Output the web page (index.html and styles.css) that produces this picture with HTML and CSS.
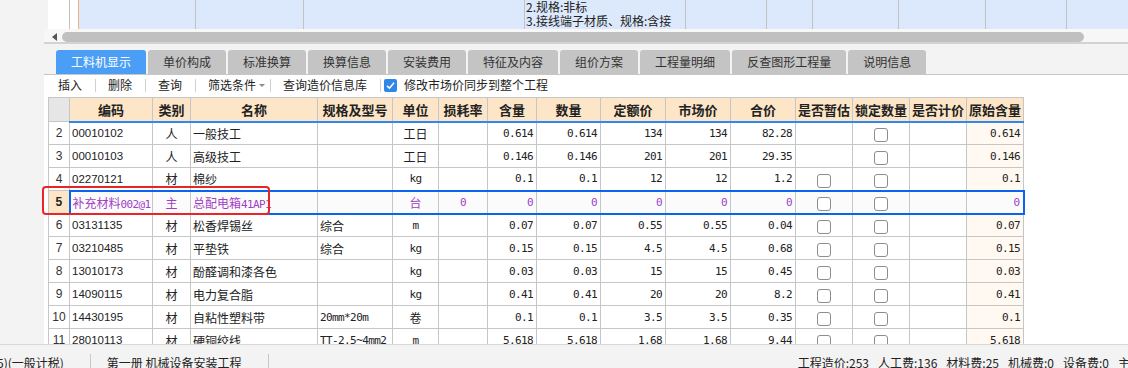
FILE: index.html
```html
<!DOCTYPE html>
<html lang="zh-CN">
<head>
    <meta charset="UTF-8">
    <title>工料机显示</title>
    <link rel="stylesheet" href="styles.css">
</head>
<body>
    <div class="main">
        <div class="gutter"></div>
        <div class="panel">
            <!-- upper list (scrolled) -->
            <div class="top-grid">
                <div class="tg w22"></div>
                <div class="tg w9 orange"></div>
                <div class="tg blue w117"></div>
                <div class="tg blue w108"></div>
                <div class="tg blue w221"></div>
                <div class="tg blue w161 desc">
                    <div>2.规格:非标</div>
                    <div>3.接线端子材质、规格:含接</div>
                </div>
                <div class="tg blue w81"></div>
                <div class="tg blue w46"></div>
                <div class="tg blue w86"></div>
                <div class="tg blue w87"></div>
                <div class="tg blue w81"></div>
                <div class="tg blue rest"></div>
            </div>
            <div class="hscroll">
                <span class="arrow"></span>
                <span class="thumb"></span>
            </div>

            <div class="tabbar">
                <div class="tab active">工料机显示</div>
                <div class="tab">单价构成</div>
                <div class="tab">标准换算</div>
                <div class="tab">换算信息</div>
                <div class="tab">安装费用</div>
                <div class="tab">特征及内容</div>
                <div class="tab">组价方案</div>
                <div class="tab">工程量明细</div>
                <div class="tab">反查图形工程量</div>
                <div class="tab">说明信息</div>
            </div>

            <div class="toolbar">
                <span class="tool">插入</span>
                <span class="sep"></span>
                <span class="tool">删除</span>
                <span class="sep"></span>
                <span class="tool">查询</span>
                <span class="sep"></span>
                <span class="tool drop">筛选条件<span class="caret"></span></span>
                <span class="sep"></span>
                <span class="tool">查询造价信息库</span>
                <span class="sep"></span>
                <label class="tool check">
                    <span class="checked">
                        <svg width="13" height="13" viewBox="0 0 13 13"><polyline points="3,6.8 5.5,9.2 10,3.8" fill="none" stroke="#fff" stroke-width="1.6"/></svg>
                    </span>
                    修改市场价同步到整个工程
                </label>
            </div>

            <div class="grid-wrap">
                <table class="grid">
                    <colgroup>
                        <col style="width:21px"><col style="width:83px"><col style="width:38px"><col style="width:127px">
                        <col style="width:75px"><col style="width:46px"><col style="width:49px"><col style="width:49px">
                        <col style="width:64px"><col style="width:65px"><col style="width:65px"><col style="width:65px">
                        <col style="width:57px"><col style="width:57px"><col style="width:57px"><col style="width:57px">
                    </colgroup>
                    <thead>
                        <tr>
                            <th class="corner"></th>
                            <th>编码</th><th>类别</th><th>名称</th><th>规格及型号</th><th>单位</th><th>损耗率</th><th>含量</th>
                            <th>数量</th><th>定额价</th><th>市场价</th><th>合价</th><th>是否暂估</th><th>锁定数量</th><th>是否计价</th><th>原始含量</th>
                        </tr>
                    </thead>
                    <tbody>
                        <tr>
                            <td class="rn">2</td><td class="code">00010102</td><td class="ctr">人</td><td>一般技工</td><td></td>
                            <td class="ctr">工日</td><td></td><td class="num">0.614</td><td class="num">0.614</td><td class="num">134</td>
                            <td class="num">134</td><td class="num">82.28</td><td></td><td class="ctr"><span class="cb"></span></td><td></td><td class="num orig">0.614</td>
                        </tr>
                        <tr>
                            <td class="rn">3</td><td class="code">00010103</td><td class="ctr">人</td><td>高级技工</td><td></td>
                            <td class="ctr">工日</td><td></td><td class="num">0.146</td><td class="num">0.146</td><td class="num">201</td>
                            <td class="num">201</td><td class="num">29.35</td><td></td><td class="ctr"><span class="cb"></span></td><td></td><td class="num orig">0.146</td>
                        </tr>
                        <tr>
                            <td class="rn">4</td><td class="code">02270121</td><td class="ctr">材</td><td>棉纱</td><td></td>
                            <td class="ctr mono">kg</td><td></td><td class="num">0.1</td><td class="num">0.1</td><td class="num">12</td>
                            <td class="num">12</td><td class="num">1.2</td><td class="ctr"><span class="cb"></span></td><td class="ctr"><span class="cb"></span></td><td></td><td class="num orig">0.1</td>
                        </tr>
                        <tr class="sel">
                            <td class="rn">5</td><td class="code first">补充材料<span class="tt">002@1</span></td><td class="ctr">主</td><td>总配电箱<span class="tt">41AP1</span></td><td></td>
                            <td class="ctr">台</td><td class="ctr mono">0</td><td class="num">0</td><td class="num">0</td><td class="num">0</td>
                            <td class="num">0</td><td class="num">0</td><td class="ctr"><span class="cb"></span></td><td class="ctr"><span class="cb"></span></td><td></td><td class="num last">0</td>
                        </tr>
                        <tr>
                            <td class="rn">6</td><td class="code">03131135</td><td class="ctr">材</td><td>松香焊锡丝</td><td>综合</td>
                            <td class="ctr mono">m</td><td></td><td class="num">0.07</td><td class="num">0.07</td><td class="num">0.55</td>
                            <td class="num">0.55</td><td class="num">0.04</td><td class="ctr"><span class="cb"></span></td><td class="ctr"><span class="cb"></span></td><td></td><td class="num orig">0.07</td>
                        </tr>
                        <tr>
                            <td class="rn">7</td><td class="code">03210485</td><td class="ctr">材</td><td>平垫铁</td><td>综合</td>
                            <td class="ctr mono">kg</td><td></td><td class="num">0.15</td><td class="num">0.15</td><td class="num">4.5</td>
                            <td class="num">4.5</td><td class="num">0.68</td><td class="ctr"><span class="cb"></span></td><td class="ctr"><span class="cb"></span></td><td></td><td class="num orig">0.15</td>
                        </tr>
                        <tr>
                            <td class="rn">8</td><td class="code">13010173</td><td class="ctr">材</td><td>酚醛调和漆各色</td><td></td>
                            <td class="ctr mono">kg</td><td></td><td class="num">0.03</td><td class="num">0.03</td><td class="num">15</td>
                            <td class="num">15</td><td class="num">0.45</td><td class="ctr"><span class="cb"></span></td><td class="ctr"><span class="cb"></span></td><td></td><td class="num orig">0.03</td>
                        </tr>
                        <tr>
                            <td class="rn">9</td><td class="code">14090115</td><td class="ctr">材</td><td>电力复合脂</td><td></td>
                            <td class="ctr mono">kg</td><td></td><td class="num">0.41</td><td class="num">0.41</td><td class="num">20</td>
                            <td class="num">20</td><td class="num">8.2</td><td class="ctr"><span class="cb"></span></td><td class="ctr"><span class="cb"></span></td><td></td><td class="num orig">0.41</td>
                        </tr>
                        <tr>
                            <td class="rn">10</td><td class="code">14430195</td><td class="ctr">材</td><td>自粘性塑料带</td><td class="mono">20mm*20m</td>
                            <td class="ctr">卷</td><td></td><td class="num">0.1</td><td class="num">0.1</td><td class="num">3.5</td>
                            <td class="num">3.5</td><td class="num">0.35</td><td class="ctr"><span class="cb"></span></td><td class="ctr"><span class="cb"></span></td><td></td><td class="num orig">0.1</td>
                        </tr>
                        <tr>
                            <td class="rn">11</td><td class="code">28010113</td><td class="ctr">材</td><td>硬铜绞线</td><td class="mono">TT-2.5~4mm2</td>
                            <td class="ctr mono">m</td><td></td><td class="num">5.618</td><td class="num">5.618</td><td class="num">1.68</td>
                            <td class="num">1.68</td><td class="num">9.44</td><td class="ctr"><span class="cb"></span></td><td class="ctr"><span class="cb"></span></td><td></td><td class="num orig">5.618</td>
                        </tr>
                    </tbody>
                </table>
            </div>
        </div>
        <div class="mark"></div>
    </div>

    <div class="status">
        <span class="st-left">5)(一般计税)</span>
        <span class="st-sep"></span>
        <span class="st-book">第一册 机械设备安装工程</span>
        <span class="st-sep"></span>
        <span class="st-right">
            <span>工程造价:253</span>
            <span>人工费:136</span>
            <span>材料费:25</span>
            <span>机械费:0</span>
            <span>设备费:0</span>
            <span>主</span>
        </span>
    </div>
</body>
</html>
```

FILE: styles.css
```css
/* styles.css */
* {
    box-sizing: border-box;
}
html, body {
    margin: 0;
    padding: 0;
}
body {
    width: 1128px;
    height: 368px;
    overflow: hidden;
    background-color: #f3f3f3;
    font-family: "Noto Sans CJK SC", sans-serif;
    font-size: 12px;
    color: #222;
}
.main {
    position: relative;
    display: flex;
    height: 344px;
}
.gutter {
    width: 44px;
    flex: none;
    background-color: #f3f3f3;
}
.panel {
    flex: 1;
    min-width: 0;
    display: flex;
    flex-direction: column;
    overflow: hidden;
}

/* upper grid */
.top-grid {
    display: flex;
    height: 29px;
    margin-left: 4px;
    overflow: hidden;
    background-color: #fff;
}
.tg {
    flex: none;
    height: 100%;
    border-right: 1px solid #c2c2c2;
}
.tg.orange {
    border-right-color: #f2b27a;
}
.tg.blue {
    background-color: #dce8fb;
}
.w22 { width: 22px; }
.w9 { width: 9px; }
.w117 { width: 117px; }
.w108 { width: 108px; }
.w221 { width: 221px; }
.w161 { width: 161px; }
.w81 { width: 81px; }
.w46 { width: 46px; }
.w86 { width: 86px; }
.w87 { width: 87px; }
.tg.rest {
    flex: 1;
    border-right: none;
}
.desc {
    padding-left: 1px;
    padding-top: 0;
    font-size: 12px;
    line-height: 14px;
    white-space: nowrap;
    overflow: hidden;
    color: #222;
}

/* scrollbar */
.hscroll {
    display: flex;
    align-items: center;
    height: 15px;
    padding-top: 2px;
    background-color: #f7f7f7;
    border-bottom: 2px solid #d2d2d2;
}
.arrow {
    width: 0;
    height: 0;
    margin-left: 8px;
    border-top: 4px solid transparent;
    border-bottom: 4px solid transparent;
    border-right: 5px solid #555;
}
.thumb {
    width: 1022px;
    height: 10px;
    margin-left: 5px;
    border-radius: 5px;
    background-color: #c0c0c0;
}

/* tabs */
.tabbar {
    display: flex;
    gap: 2px;
    height: 31px;
    padding: 6px 0 0 12px;
    border-bottom: 1px solid #c6c6c6;
    background-color: #f3f3f3;
}
.tab {
    height: 24px;
    line-height: 24px;
    padding: 0 15px;
    border-radius: 3px 3px 0 0;
    background-color: #c4c4c4;
    color: #333;
    white-space: nowrap;
}
.tab.active {
    background-color: #4b9ef5;
    color: #fff;
}

/* toolbar */
.toolbar {
    display: flex;
    align-items: center;
    height: 20px;
    padding-left: 2px;
    background-color: #fff;
    white-space: nowrap;
}
.tool {
    display: flex;
    align-items: center;
    padding: 0 13px 0 12px;
    line-height: 16px;
}
.tool.drop {
    padding-right: 5px;
}
.caret {
    width: 0;
    height: 0;
    margin-left: 3px;
    border-left: 3px solid transparent;
    border-right: 3px solid transparent;
    border-top: 3px solid #8a8a8a;
}
.tool.check {
    padding-left: 3px;
    gap: 7px;
}
.checked {
    display: inline-flex;
    width: 13px;
    height: 13px;
    border-radius: 2px;
    background-color: #2f87ea;
}
.sep {
    width: 1px;
    height: 13px;
    background-color: #d0d0d0;
}

/* material grid */
.grid-wrap {
    flex: 1;
    overflow: hidden;
    padding: 2px 0 0 4px;
    background-color: #fff;
}
.grid {
    border-collapse: collapse;
    table-layout: fixed;
    width: 975px;
}
.grid th, .grid td {
    height: 23px;
    padding: 0 2px;
    border: 1px solid #c6c6c6;
    white-space: nowrap;
    overflow: hidden;
    font-weight: normal;
    text-align: left;
}
.grid th {
    height: 24px;
    padding: 0;
    text-align: center;
    font-size: 13px;
    font-weight: bold;
    color: #222;
    background-color: #fde6c7;
    border-bottom: 2px solid #2f88f0;
}
.grid th.corner {
    background-color: #e6e6e6;
    border-bottom: 1px solid #c6c6c6;
}
.grid td.rn {
    padding: 0;
    text-align: center;
    font-family: "Liberation Sans", sans-serif;
    font-size: 12px;
    color: #333;
}
.grid td.code {
    font-family: "Liberation Sans", "Noto Sans CJK SC", sans-serif;
    font-size: 11.5px;
}
.grid td.ctr {
    padding: 0;
    text-align: center;
}
.grid td.num, .grid td.mono, .tt {
    font-family: "DejaVu Sans Mono", monospace;
    font-size: 11px;
    letter-spacing: -0.6px;
}
.grid td.code .tt {
    font-size: 11px;
}
.grid td.code.first {
    font-family: "Noto Sans CJK SC", sans-serif;
    font-size: 12px;
}
.grid td.num {
    text-align: right;
    padding-right: 3px;
}
.grid td.orig {
    background-color: #fff9f2;
}
.cb {
    display: inline-block;
    width: 14px;
    height: 14px;
    vertical-align: middle;
    border: 1px solid #8d8d8d;
    border-radius: 3px;
    background-color: #fff;
}

/* selected row */
.grid tr.sel td {
    color: #a23dc7;
    background-color: #fbfbfb;
    border-top: 2px solid #0b64f0;
    border-bottom: 2px solid #0b64f0;
}
.grid tr.sel td.rn {
    color: #222;
    font-weight: bold;
    background-color: #fde6c7;
    border-top: 1px solid #c6c6c6;
    border-bottom: 1px solid #c6c6c6;
}
.grid tr.sel td.first {
    border-left: 2px solid #0b64f0;
}
.grid tr.sel td.last {
    border-right: 2px solid #0b64f0;
}

/* red annotation */
.mark {
    position: absolute;
    left: 42px;
    top: 186px;
    width: 228px;
    height: 29px;
    border: 2.5px solid #e8262a;
    border-radius: 4px;
}

/* status bar */
.status {
    display: flex;
    align-items: flex-start;
    height: 24px;
    padding-top: 10px;
    border-top: 1px solid #d8d8d8;
    background-color: #f3f3f3;
    white-space: nowrap;
    overflow: hidden;
    line-height: 16px;
    color: #222;
}
.st-left {
    margin-left: -3px;
}
.st-sep {
    width: 1px;
    height: 16px;
    margin: -1px 16px 0 26px;
    background-color: #c8c8c8;
}
.st-right {
    display: flex;
    gap: 9px;
    margin-left: auto;
    margin-right: -2px;
}
```
